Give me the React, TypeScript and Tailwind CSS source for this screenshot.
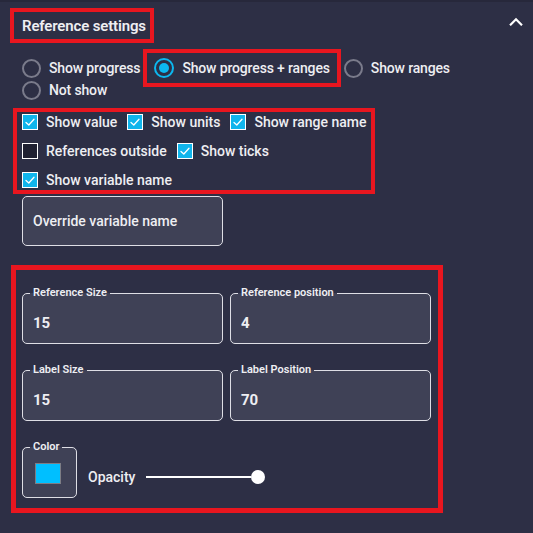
import React from "react";

const RED = "border-[#e8161f]";

function Radio({ label, selected = false }: { label: string; selected?: boolean }) {
  return (
    <div className="flex h-[22px] items-center gap-[8px]">
      {selected ? (
        <span className="flex h-[20px] w-[20px] items-center justify-center rounded-full border-2 border-[#0cb8f0]">
          <span className="h-[10px] w-[10px] rounded-full bg-[#0cb8f0]" />
        </span>
      ) : (
        <span className="h-[19px] w-[19px] rounded-full border-2 border-[#7a7b8b]" />
      )}
      <span className="whitespace-nowrap text-[14px] font-medium tracking-[-0.15px] text-[#eeeef2]">{label}</span>
    </div>
  );
}

function Check({ label, checked = true }: { label: string; checked?: boolean }) {
  return (
    <div className="flex items-center gap-[8px]">
      {checked ? (
        <span className="flex h-[16px] w-[16px] items-center justify-center border border-white bg-[#10b5ec]">
          <svg width="14" height="14" viewBox="0 0 14 14" fill="none">
            <polyline points="3,7.5 5.8,10 11,4.2" stroke="white" strokeWidth="1.3" strokeLinecap="round" strokeLinejoin="round" />
          </svg>
        </span>
      ) : (
        <span className="h-[16px] w-[16px] border border-white bg-[#1f2031]" />
      )}
      <span className="whitespace-nowrap text-[14px] font-medium text-[#eeeef2]">{label}</span>
    </div>
  );
}

function Field({ label, value }: { label: string; value: string }) {
  return (
    <fieldset className="h-[57px] w-[201px] rounded-[5px] border border-[#dedee5] bg-[#3f4156] pl-[7px]">
      <legend className="px-[3px] text-[11px] font-semibold leading-[12px] text-[#eeeef2]">{label}</legend>
      <div className="mt-[14px] pl-[3px] text-[15px] font-bold leading-[20px] text-[#eeeef2]">{value}</div>
    </fieldset>
  );
}

export default function App() {
  return (
    <div
      className="h-[533px] w-[533px] overflow-hidden border-t-2 border-[#27283b] bg-[#2d2f45] text-[#eeeef2]"
      style={{ fontFamily: "Roboto, 'Noto Sans', sans-serif" }}
    >
      {/* header */}
      <div className="flex items-start justify-between pl-[10px] pr-[10px] pt-[6px]">
        <div className={`flex h-[35px] w-[144px] items-center border-4 ${RED} pl-[8px] pt-[1px]`}>
          <span className="whitespace-nowrap text-[15px] font-semibold tracking-[-0.15px]">Reference settings</span>
        </div>
        <svg className="mt-[9px]" width="14" height="9" viewBox="0 0 14 9" fill="none">
          <polyline points="1.8,7.5 7,2.3 12.2,7.5" stroke="white" strokeWidth="2.2" strokeLinecap="square" />
        </svg>
      </div>

      {/* display mode */}
      <div className="mt-[14px] flex w-[460px] flex-wrap items-center gap-x-[14px] pl-[22px]">
        <Radio label="Show progress" />
        <div className={`-mx-[11px] -my-2 border-4 ${RED} px-[7px] py-1`}>
          <Radio label="Show progress + ranges" selected />
        </div>
        <Radio label="Show ranges" />
        <Radio label="Not show" />
      </div>

      {/* toggles */}
      <div className={`ml-[13px] mt-[7px] flex w-fit flex-col gap-y-[9px] border-4 ${RED} px-[5px]`}>
        <div className="flex h-[20px] items-center gap-[10px]">
          <Check label="Show value" />
          <Check label="Show units" />
          <Check label="Show range name" />
        </div>
        <div className="flex h-[20px] items-center gap-[10px]">
          <Check label="References outside" checked={false} />
          <Check label="Show ticks" />
        </div>
        <div className="flex h-[20px] items-center gap-[10px]">
          <Check label="Show variable name" />
        </div>
      </div>

      <div className="ml-[22px] mt-[2px] flex h-[50px] w-[201px] items-center rounded-[5px] border border-[#dedee5] bg-[#3f4156] pl-[10px] text-[14px] font-medium">
        Override variable name
      </div>

      {/* sizes and colour */}
      <div className={`ml-[11px] mt-[19px] w-[432px] border-[5px] ${RED} pb-[10px] pl-[6px] pt-[17px]`}>
        <div className="grid w-fit grid-cols-2 gap-x-[7px] gap-y-[20px]">
          <Field label="Reference Size" value="15" />
          <Field label="Reference position" value="4" />
          <Field label="Label Size" value="15" />
          <Field label="Label Position" value="70" />
        </div>
        <div className="mt-[20px] flex items-start">
          <fieldset className="h-[57px] w-[55px] rounded-[5px] border border-[#dedee5] bg-[#3f4156] pl-[7px]">
            <legend className="px-[3px] text-[11px] font-semibold leading-[12px]">Color</legend>
            <div className="ml-[5px] mt-[10px] h-[21px] w-[26px] border border-[#7d7d85] bg-[#00bfff]" />
          </fieldset>
          <div className="ml-[11px] mt-[26px] flex h-[20px] items-center">
            <span className="text-[14px] font-medium">Opacity</span>
            <div className="ml-[11px] h-[2px] w-[105px] bg-white" />
            <div className="h-[14px] w-[14px] rounded-full bg-white" />
          </div>
        </div>
      </div>
    </div>
  );
}
